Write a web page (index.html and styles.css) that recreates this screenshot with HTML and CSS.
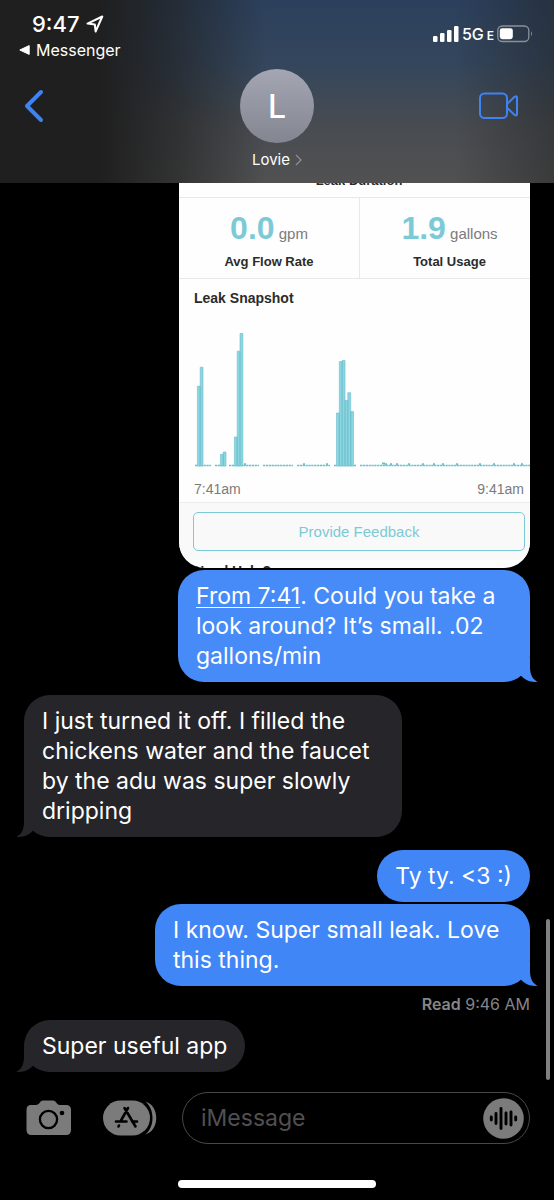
FILE: index.html
```html
<!DOCTYPE html>
<html lang="en">
<head>
<meta charset="utf-8">
<meta name="viewport" content="width=device-width, initial-scale=1">
<title>Lovie</title>
<link rel="stylesheet" href="styles.css">
</head>
<body>
<div class="screen">
  <header class="top">
    <div class="status">
      <div class="status-left">
        <div class="clock">9:47
          <svg width="18" height="18" viewBox="0 0 18 18" aria-hidden="true"><path d="M1.5 8.6 16.3 1.5 9.6 16.5 8.8 9.4z" fill="none" stroke="currentColor" stroke-width="2" stroke-linejoin="round"/></svg>
        </div>
        <a class="back-app" href="#">
          <svg width="11" height="10" viewBox="0 0 11 10" aria-hidden="true"><path d="M0.8 5 10.2 0.6V9.4z" fill="currentColor" stroke="currentColor" stroke-linejoin="round"/></svg>
          Messenger</a>
      </div>
      <div class="status-right">
        <svg width="26" height="16" viewBox="0 0 26 16" aria-hidden="true"><g fill="currentColor"><rect x="0" y="10" width="4.500" height="6" rx="1.300"/><rect x="7" y="7" width="4.500" height="9" rx="1.300"/><rect x="14" y="4" width="4.500" height="12" rx="1.300"/><rect x="21" y="0" width="4.500" height="16" rx="1.300"/></g></svg>
        <span class="network">5G<small>E</small></span>
        <svg width="36" height="18" viewBox="0 0 36 18" aria-hidden="true"><rect x="0.8" y="1" width="31" height="15.5" rx="4.5" fill="none" stroke="#8b9097" stroke-width="1.3"/><rect x="2.8" y="3.2" width="13" height="11" rx="2.4" fill="#fff"/><path d="M34 6.3q1.9 2.4 0 5z" fill="#8b9097"/></svg>
      </div>
    </div>
    <nav class="nav">
      <button class="icon-btn" aria-label="Back"><svg width="20" height="34" viewBox="0 0 20 34"><path d="M17 3 3 17 17 31" fill="none" stroke="#3f83f3" stroke-width="4" stroke-linecap="round" stroke-linejoin="round"/></svg></button>
      <button class="contact">
        <span class="avatar">L</span>
        <span class="name">Lovie <svg width="7" height="12" viewBox="0 0 7 12" aria-hidden="true"><path d="M1 1 6 6 1 11" fill="none" stroke="#8d8d90" stroke-width="1.3"/></svg></span>
      </button>
      <button class="icon-btn end" aria-label="Video call"><svg width="41" height="28" viewBox="0 0 41 28"><g fill="none" stroke="#3f83f3" stroke-width="2" stroke-linejoin="round"><rect x="2" y="1.5" width="27" height="24.5" rx="4.5"/><path d="M29 12 36.6 4.8Q39 3.5 39 5.8V22Q39 24.3 36.6 22.9L29 15.7z"/></g></svg></button>
    </nav>
  </header>

  <main class="thread">
    <article class="shot">
      <h2 class="shot-title">Leak Duration</h2>
      <div class="stats">
        <div class="stat"><p class="value"><b>0.0</b> gpm</p><p class="label">Avg Flow Rate</p></div>
        <div class="stat"><p class="value"><b>1.9</b> gallons</p><p class="label">Total Usage</p></div>
      </div>
      <section class="snapshot">
        <h3>Leak Snapshot</h3>
        <svg class="chart" viewBox="0 0 336 142" role="img" aria-label="Leak flow over time">
          <path d="M1 140.5H17M21 140.5H31M35 140.5H65M69 140.5H99M103 140.5H136M140 140.5H162M166 140.5H336" stroke="#6dc0cb" stroke-width="1.6" stroke-dasharray="2.3 .55"/>
          <g fill="#8ad6e1" stroke="#6cbccb" stroke-width=".6">
            <path d="M3.4 141V61.2H6.2V141zM6.2 141V42.2H9V141z"/>
            <path d="M26.4 141V129.3H29.2V141zM29.2 141V127H32V141z"/>
            <path d="M40.4 141V112H43.2V141zM43.2 141V26.2H46V141zM46 141V8.5H48.9V141z"/>
            <path d="M142.5 141V88H145.3V141zM145.3 141V36.6H148.1V141zM148.1 141V35.5H151V141zM151 141V75.5H153.8V141zM153.8 141V67.7H156.7V141zM156.7 141V86.6H159.5V141z"/>
          </g>
          <path d="M50 139.3h2M109 139.3h2M132 139.3h2M188 138.5h3M191 139.3h2M196 139.3h2M202 139.3h2M214 139.3h2M228 139.3h2M239 139.3h2M248 139.3h2M262 139.3h2M285 139.3h2M299 139.3h2M319 139.3h2M327 139.3h2" stroke="#6dc0cb" stroke-width="2"/>
        </svg>
        <div class="axis"><span>7:41am</span><span>9:41am</span></div>
      </section>
      <div class="feedback"><button>Provide Feedback</button></div>
      <p class="need-help">Need Help?</p>
    </article>

    <div class="bubble sent w-a"><a href="#">From 7:41</a>. Could you take a look around? It’s small. .02 gallons/min<svg class="tail-mark" width="22" height="24" viewBox="0 0 22 24" aria-hidden="true"><path d="M0 0H14V9C14 17 17 22 22 23.800 14 24.500 9 22 5 17.800z"/></svg></div>

    <div class="bubble received w-b">I just turned it off. I filled the chickens water and the faucet by the adu was super slowly dripping<svg class="tail-mark" width="22" height="24" viewBox="0 0 22 24" aria-hidden="true"><path d="M0 0H14V9C14 17 17 22 22 23.800 14 24.500 9 22 5 17.800z"/></svg></div>

    <div class="bubble sent">Ty ty. &lt;3 :)</div>
    <div class="bubble sent w-c close">I know. Super small leak. Love this thing.<svg class="tail-mark" width="22" height="24" viewBox="0 0 22 24" aria-hidden="true"><path d="M0 0H14V9C14 17 17 22 22 23.800 14 24.500 9 22 5 17.800z"/></svg></div>
    <p class="receipt"><b>Read</b> 9:46 AM</p>

    <div class="bubble received">Super useful app<svg class="tail-mark" width="22" height="24" viewBox="0 0 22 24" aria-hidden="true"><path d="M0 0H14V9C14 17 17 22 22 23.800 14 24.500 9 22 5 17.800z"/></svg></div>
    <div class="scroll-thumb"></div>
  </main>

  <footer class="composer">
    <button class="icon-btn" aria-label="Camera"><svg width="46" height="36" viewBox="0 0 46 36"><path d="M5 5H10Q12 5 13.3 3.2L14.4 1.8Q15.7 .5 17.5 .5H26.5Q28.4 .5 29.6 1.8L31 3.4Q32.2 5 34 5H40Q45 5 45 10V30Q45 35 40 35H5.500Q.5 35 .5 30V10Q.5 5 5 5z" fill="#7b7b7b"/><circle cx="22.500" cy="19.500" r="8.600" fill="#7b7b7b" stroke="#000" stroke-width="2.300"/><circle cx="36" cy="13" r="2.300" fill="#000"/></svg></button>
    <button class="icon-btn" aria-label="Apps"><svg width="54" height="36" viewBox="0 0 54 36"><rect x="0" y=".5" width="47" height="35" rx="17.500" fill="#7b7b7b"/><path d="M42 1.500C57 5 57 31 42 34.500C52 28 52 8 42 1.500z" fill="#7b7b7b"/><g fill="none" stroke="#000" stroke-width="2.600" stroke-linecap="round"><path d="M25 8 18 20.500M21.500 8 32.500 26.500M13 21.500H23.500M29 21.500H34M16 25.500 15.500 26.500"/></g></svg></button>
    <div class="field">
      <input type="text" placeholder="iMessage" aria-label="iMessage">
      <button class="icon-btn" aria-label="Record audio"><svg width="41" height="41" viewBox="0 0 41 41"><circle cx="20.500" cy="20.500" r="20.300" fill="#7b7b7b"/><path d="M8.300 19V22M13 15.500V25.500M18 10.500V30.500M23 15V26M28 14V27M32.700 19V22" stroke="#000" stroke-width="2.900" stroke-linecap="round"/></svg></button>
    </div>
  </footer>
  <div class="home-bar"></div>
</div>
</body>
</html>
```

FILE: styles.css
```css
* {
  box-sizing: border-box;
}

body,
h2,
h3,
p {
  margin: 0;
}

body {
  background: #000;
  color: #fff;
  font-family: Inter, "Liberation Sans", sans-serif;
}

button {
  padding: 0;
  border: 0;
  background: none;
  color: inherit;
  font: inherit;
}

a {
  color: inherit;
}

svg {
  display: block;
  flex-shrink: 0;
}

.screen {
  display: flex;
  flex-direction: column;
  min-height: 100vh;
}

/* Header */

.top {
  padding: 10px 24px 13px;
  background:
    linear-gradient(90deg, #1f1f1f 18%, rgba(31, 31, 31, 0.6) 32%, rgba(31, 31, 31, 0) 48%, rgba(31, 31, 31, 0) 82%, rgba(31, 31, 31, 0.45) 100%),
    linear-gradient(180deg, #2c405d 0%, #34465c 35%, #484c51 68%, #515152 100%);
}

.status {
  display: flex;
  justify-content: space-between;
  height: 56px;
}

.status-left {
  margin-left: -5px;
}

.clock {
  display: flex;
  align-items: center;
  gap: 6px;
  padding-left: 13px;
  font-size: 22px;
  font-weight: 500;
  line-height: 28px;
}

.back-app {
  display: flex;
  align-items: center;
  gap: 6px;
  font-size: 16px;
  line-height: 24px;
  text-decoration: none;
}

.status-right {
  display: flex;
  align-items: center;
  gap: 3px;
  height: 48px;
  margin-right: -3px;
}

.network {
  font-size: 16px;
  font-weight: 500;
}

.network small {
  margin-left: 3px;
  font-size: 12px;
  font-weight: 600;
}

.nav {
  display: grid;
  grid-template-columns: 1fr auto 1fr;
  align-items: start;
}

.nav > .icon-btn {
  display: flex;
  align-items: center;
  height: 80px;
}

.nav > .end {
  justify-content: flex-end;
  padding-right: 11px;
}

.contact {
  display: flex;
  flex-direction: column;
  align-items: center;
  gap: 6px;
  padding-top: 3px;
}

.avatar {
  display: flex;
  align-items: center;
  justify-content: center;
  width: 74px;
  height: 74px;
  border-radius: 50%;
  background: linear-gradient(180deg, #a4a7b3, #838690);
  font-size: 32px;
  font-weight: 500;
}

.name {
  display: flex;
  align-items: center;
  gap: 5px;
  font-size: 15px;
  line-height: 21px;
}

/* Conversation */

.thread {
  position: relative;
  display: flex;
  flex: 1;
  flex-direction: column;
  align-items: flex-start;
  padding: 0 24px 20px;
}

.bubble {
  position: relative;
  margin-top: 13px;
  padding: 11px 18px;
  border-radius: 26px;
  font-size: 23px;
  line-height: 30px;
}

.sent {
  align-self: flex-end;
  background: #4086f7;
}

.received {
  background: #26252a;
}

.shot + .bubble,
.close {
  margin-top: 2px;
}

.shot + .bubble {
  background: #468bf7;
}

.w-a {
  max-width: 352px;
}

.w-b {
  max-width: 378px;
}

.w-c {
  max-width: 375px;
}

.bubble a {
  text-decoration-thickness: 1px;
  text-underline-offset: 3px;
}

.tail-mark {
  position: absolute;
  right: -8px;
  bottom: 0;
  fill: #4086f7;
}

.shot + .bubble .tail-mark {
  fill: #468bf7;
}

.received .tail-mark {
  right: auto;
  left: -8px;
  fill: #26252a;
  transform: scaleX(-1);
}

.receipt {
  align-self: flex-end;
  margin-top: 8px;
  color: #85858a;
  font-size: 16px;
  line-height: 20px;
}

.receipt b {
  font-weight: 600;
}

.receipt + .bubble {
  margin-top: 6px;
}

.scroll-thumb {
  position: absolute;
  right: 4px;
  bottom: 12px;
  width: 4px;
  height: 161px;
  border-radius: 2px;
  background: #808080;
}

/* Shared app screenshot */

.shot {
  align-self: flex-end;
  width: 351px;
  overflow: hidden;
  border-radius: 0 0 26px 26px;
  background: #fefefe;
  color: #2b2b2b;
  font-family: "Liberation Sans", Arial, sans-serif;
}

.shot-title {
  margin-top: -10px;
  padding: 0 0 8px 9px;
  font-size: 13px;
  line-height: 16px;
  text-align: center;
}

.stats {
  display: grid;
  grid-template-columns: 1fr 1fr;
  width: calc(100% + 9px);
  border-top: 1px solid #e8e8e8;
  border-bottom: 1px solid #e8e8e8;
}

.stat {
  padding: 12px 0 8px;
  text-align: center;
}

.stat + .stat {
  border-left: 1px solid #e8e8e8;
}

.value {
  color: #7b7b7b;
  font-size: 15px;
  line-height: 36px;
}

.value b {
  color: #7ccad6;
  font-size: 32px;
}

.label {
  margin-top: 1px;
  font-size: 13px;
  font-weight: 700;
  line-height: 17px;
}

.snapshot {
  padding: 10px 0 4px 15px;
}

.snapshot h3 {
  font-size: 14px;
  line-height: 18px;
}

.chart {
  width: 100%;
  margin-top: 18px;
}

.axis {
  display: flex;
  justify-content: space-between;
  margin-top: 13px;
  padding-right: 6px;
  color: #7b7b7b;
  font-size: 14px;
  line-height: 18px;
}

.feedback {
  padding: 9px 5px 9px 14px;
  border-top: 1px solid #ececec;
  background: #f9f9f9;
}

.feedback button {
  width: 100%;
  height: 39px;
  border: 1px solid #7ccad6;
  border-radius: 5px;
  color: #7ccad6;
  font-size: 15px;
}

.need-help {
  height: 8px;
  padding: 3px 0 0 15px;
  overflow: hidden;
  font-size: 14px;
  font-weight: 700;
  line-height: 16px;
}

/* Composer */

.composer {
  display: flex;
  align-items: center;
  padding: 0 24px 0 26px;
}

.composer > .icon-btn + .icon-btn {
  margin-left: 31px;
}

.field {
  display: flex;
  flex: 1;
  align-items: center;
  min-width: 0;
  height: 52px;
  margin-left: 25px;
  padding: 0 5px 0 18px;
  border: 1px solid #48484a;
  border-radius: 26px;
}

.field input {
  flex: 1;
  min-width: 0;
  padding: 0;
  border: 0;
  outline: 0;
  background: none;
  color: #fff;
  font: inherit;
  font-size: 23px;
}

.field input::placeholder {
  color: #505053;
  opacity: 1;
}

.home-bar {
  width: 198px;
  height: 8px;
  margin: 36px auto 12px;
  border-radius: 4px;
  background: #fff;
}
```
